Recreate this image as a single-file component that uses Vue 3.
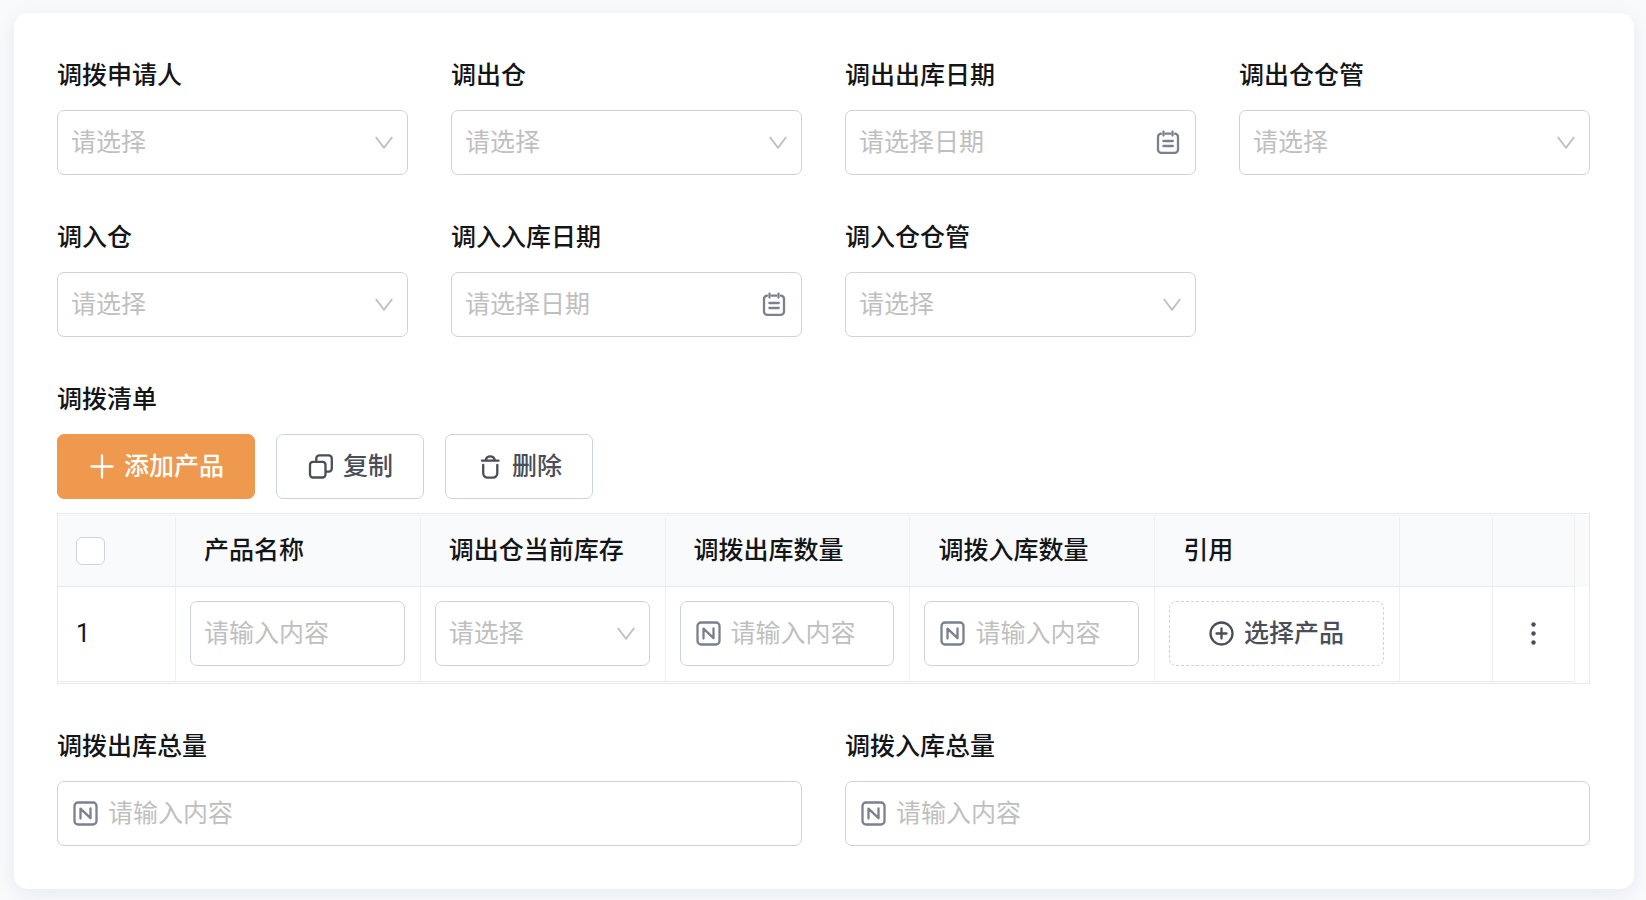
<script setup>
import { ref, reactive } from 'vue';

const fields = [
  { key: 'applicant', label: '调拨申请人', type: 'select' },
  { key: 'outStore', label: '调出仓', type: 'select' },
  { key: 'outDate', label: '调出出库日期', type: 'date' },
  { key: 'outKeeper', label: '调出仓仓管', type: 'select' },
  { key: 'inStore', label: '调入仓', type: 'select' },
  { key: 'inDate', label: '调入入库日期', type: 'date' },
  { key: 'inKeeper', label: '调入仓仓管', type: 'select' },
];

const totals = [
  { key: 'outTotal', label: '调拨出库总量' },
  { key: 'inTotal', label: '调拨入库总量' },
];

const columns = ['产品名称', '调出仓当前库存', '调拨出库数量', '调拨入库数量', '引用'];

const form = reactive({
  applicant: '',
  outStore: '',
  outDate: '',
  outKeeper: '',
  inStore: '',
  inDate: '',
  inKeeper: '',
  outTotal: '',
  inTotal: '',
});

const newRow = () => ({ name: '', stock: '', outCount: '', inCount: '' });
const rows = ref([newRow()]);
const checkAll = ref(false);

function addRow() {
  rows.value.push(newRow());
}

function copyRows() {
  if (!checkAll.value) return;
  rows.value.push(...rows.value.map(row => ({ ...row })));
}

function removeRows() {
  if (checkAll.value) rows.value = [];
}
</script>

<template>
  <svg class="sprite" aria-hidden="true">
    <symbol id="i-down" viewBox="0 0 18 14">
      <path d="M0.8 1 9 11.800 17.200 1" fill="none" stroke="currentColor" stroke-width="1.900" />
    </symbol>
    <symbol id="i-date" viewBox="0 0 25 25">
      <g fill="none" stroke="currentColor" stroke-width="2.300" stroke-linecap="round">
        <path d="M5 3.700a3.400 3.400 0 0 0-3 3.400v12.400A3.400 3.400 0 0 0 5.400 22.900h13.200a3.400 3.400 0 0 0 3.400-3.400V7.100a3.400 3.400 0 0 0-3-3.400M9.600 3.700h4.800" />
        <path d="M7.500 1.600v4M16.500 1.600v4M7.400 11h9.400M7.400 16h9.400" />
      </g>
    </symbol>
    <symbol id="i-number" viewBox="0 0 25 25">
      <g fill="none" stroke="currentColor" stroke-width="2.300" stroke-linecap="round" stroke-linejoin="round">
        <rect x="1.500" y="1.500" width="22" height="22" rx="3.500" />
        <path d="M7.500 17.600V7.600l10 9.600V7.400" />
      </g>
    </symbol>
    <symbol id="i-plus" viewBox="0 0 25 25">
      <path d="M13 1.500v22M2.500 12.500h21" fill="none" stroke="currentColor" stroke-width="2.300" stroke-linecap="round" />
    </symbol>
    <symbol id="i-copy" viewBox="0 0 25 25">
      <g fill="none" stroke="currentColor" stroke-width="2.300">
        <rect x="2" y="7.800" width="15.500" height="15.700" rx="3" />
        <path d="M8.300 7.500V4.400a3 3 0 0 1 3-3h9.500a3 3 0 0 1 3 3v10.200a3 3 0 0 1-3 3h-3" />
      </g>
    </symbol>
    <symbol id="i-trash" viewBox="0 0 25 25">
      <g fill="none" stroke="currentColor" stroke-width="2.300" stroke-linecap="round">
        <path d="M5 6.700h16.500M8.700 6.200a4.600 4.600 0 0 1 9.100 0" />
        <path d="M6.200 11v8.300a4.300 4.300 0 0 0 4.300 4.300h5.500a4.300 4.300 0 0 0 4.300-4.300V11" />
      </g>
    </symbol>
    <symbol id="i-add-circle" viewBox="0 0 25 25">
      <g fill="none" stroke="currentColor" stroke-width="2.300" stroke-linecap="round">
        <circle cx="12.500" cy="12.500" r="11" />
        <path d="M12.500 7.500v10M7.500 12.500h10" />
      </g>
    </symbol>
    <symbol id="i-more" viewBox="0 0 25 25">
      <g fill="currentColor">
        <circle cx="12.500" cy="3.500" r="2.200" />
        <circle cx="12.500" cy="12.500" r="2.200" />
        <circle cx="12.500" cy="21.500" r="2.200" />
      </g>
    </symbol>
  </svg>

  <form class="card" @submit.prevent>
    <div class="grid four">
      <div v-for="field in fields" :key="field.key">
        <label class="title" :for="field.key">{{ field.label }}</label>
        <div class="box">
          <template v-if="field.type === 'select'">
            <select :id="field.key" v-model="form[field.key]">
              <option value="">请选择</option>
            </select>
            <svg class="arrow"><use href="#i-down" /></svg>
          </template>
          <template v-else>
            <input :id="field.key" v-model="form[field.key]" type="text" placeholder="请选择日期">
            <svg class="icon muted"><use href="#i-date" /></svg>
          </template>
        </div>
      </div>
    </div>

    <section>
      <h2 class="title">调拨清单</h2>
      <div class="toolbar">
        <button type="button" class="btn primary" @click="addRow">
          <svg class="icon"><use href="#i-plus" /></svg>添加产品
        </button>
        <button type="button" class="btn" @click="copyRows">
          <svg class="icon"><use href="#i-copy" /></svg>复制
        </button>
        <button type="button" class="btn" @click="removeRows">
          <svg class="icon"><use href="#i-trash" /></svg>删除
        </button>
      </div>

      <div class="table-box">
        <div class="table-main">
          <table>
            <colgroup>
              <col class="col-index">
              <col v-for="name in columns" :key="name">
              <col class="col-blank">
              <col class="col-more">
            </colgroup>
            <thead>
              <tr>
                <th class="index">
                  <input v-model="checkAll" class="check" type="checkbox" aria-label="全选">
                </th>
                <th v-for="name in columns" :key="name">{{ name }}</th>
                <th></th>
                <th></th>
              </tr>
            </thead>
            <tbody>
              <tr v-for="(row, i) in rows" :key="i">
                <td class="index">{{ i + 1 }}</td>
                <td>
                  <div class="box">
                    <input v-model="row.name" type="text" placeholder="请输入内容" aria-label="产品名称">
                  </div>
                </td>
                <td>
                  <div class="box">
                    <select v-model="row.stock" aria-label="调出仓当前库存">
                      <option value="">请选择</option>
                    </select>
                    <svg class="arrow"><use href="#i-down" /></svg>
                  </div>
                </td>
                <td>
                  <div class="box number">
                    <svg class="icon muted"><use href="#i-number" /></svg>
                    <input v-model="row.outCount" type="text" placeholder="请输入内容" aria-label="调拨出库数量">
                  </div>
                </td>
                <td>
                  <div class="box number">
                    <svg class="icon muted"><use href="#i-number" /></svg>
                    <input v-model="row.inCount" type="text" placeholder="请输入内容" aria-label="调拨入库数量">
                  </div>
                </td>
                <td>
                  <button type="button" class="btn dashed">
                    <svg class="icon"><use href="#i-add-circle" /></svg>选择产品
                  </button>
                </td>
                <td></td>
                <td>
                  <button type="button" class="more" aria-label="更多">
                    <svg class="icon"><use href="#i-more" /></svg>
                  </button>
                </td>
              </tr>
            </tbody>
          </table>
        </div>
        <div class="gutter"></div>
      </div>
    </section>

    <div class="grid two">
      <div v-for="total in totals" :key="total.key">
        <label class="title" :for="total.key">{{ total.label }}</label>
        <div class="box number">
          <svg class="icon muted"><use href="#i-number" /></svg>
          <input :id="total.key" v-model="form[total.key]" type="text" placeholder="请输入内容">
        </div>
      </div>
    </div>
  </form>
</template>

<style>
body {
  background: #f8fafc;
}
</style>

<style scoped>
.sprite {
  display: none;
}

.card {
  display: flex;
  flex-direction: column;
  gap: 43px;
  margin: 13px 12px 11px 14px;
  padding: 43px 44px 43px 43px;
  border-radius: 14px;
  background: #fff;
  box-shadow: 0 4px 20px rgba(30, 40, 90, 0.08);
  color: #141517;
  font-family: Roboto, "Noto Sans CJK SC", sans-serif;
  font-size: 25px;
  line-height: 38px;
}

.grid {
  display: grid;
  gap: 43px;
}

.four {
  grid-template-columns: repeat(4, minmax(0, 1fr));
}

.two {
  grid-template-columns: repeat(2, minmax(0, 1fr));
}

.title {
  display: block;
  margin: 0 0 14px;
  font-size: 25px;
  font-weight: 500;
  line-height: 40px;
}

/* Поля ввода */
.box {
  display: flex;
  align-items: center;
  gap: 10px;
  box-sizing: border-box;
  height: 65px;
  padding: 0 14px 0 13px;
  border: 1px solid #cdd2e1;
  border-radius: 7px;
  background: #fff;
}

.number {
  padding-left: 15px;
}

.box input,
.box select {
  flex: 1;
  min-width: 0;
  height: 38px;
  margin: 0;
  padding: 0;
  border: 0;
  outline: 0;
  background: transparent;
  appearance: none;
  font: inherit;
  color: #bfbfbf;
}

.box input {
  color: #141517;
}

.box input::placeholder {
  color: #bfbfbf;
  opacity: 1;
}

.icon {
  flex: none;
  display: block;
  width: 25px;
  height: 25px;
}

.arrow {
  flex: none;
  width: 18px;
  height: 14px;
  color: #bfbfbf;
  pointer-events: none;
}

.muted {
  color: #7a818d;
}

/* Кнопки */
.toolbar {
  display: flex;
  gap: 21px;
  margin-bottom: 14px;
}

.btn {
  display: flex;
  align-items: center;
  justify-content: center;
  gap: 10px;
  box-sizing: border-box;
  height: 65px;
  padding: 0 30px 0 31px;
  border: 1px solid #cdd2e1;
  border-radius: 7px;
  background: #fff;
  color: #494e57;
  font: inherit;
  font-weight: 500;
  white-space: nowrap;
  cursor: pointer;
}

.primary {
  border-color: #ee994e;
  background: #ee994e;
  color: #fff;
}

.dashed {
  width: 100%;
  padding: 0;
  border-style: dashed;
}

/* Таблица */
.table-box {
  display: flex;
  align-items: flex-start;
  padding: 1px 0;
  border: 1px solid #e8e9ec;
}

.table-main {
  flex: 1;
  min-width: 0;
  padding-top: 1px;
  border-top: 1px solid #f0f0f0;
}

.gutter {
  width: 14px;
  height: 72px;
  background: #fafafa;
}

table {
  width: 100%;
  table-layout: fixed;
  border-collapse: separate;
  border-spacing: 0;
}

.col-index {
  width: 118px;
}

.col-blank {
  width: 93px;
}

.col-more {
  width: 82px;
}

th,
td {
  box-sizing: border-box;
  border-right: 1px solid #edeff2;
  border-bottom: 1px solid #e5eaf1;
  text-align: left;
}

th {
  height: 70px;
  padding: 0 0 2px 28px;
  background: #f9fafc;
  font-weight: 500;
  white-space: nowrap;
}

td {
  height: 95px;
  padding: 14px 15px 15px 14px;
}

th.index,
td.index {
  padding-left: 18px;
}

.check {
  display: block;
  width: 29px;
  height: 28px;
  margin: 0;
  border: 1px solid #cdd2e1;
  border-radius: 6px;
  background: #fff;
  appearance: none;
}

.check:checked {
  background: #ee994e;
}

.more {
  display: block;
  margin: 0 auto;
  padding: 0;
  border: 0;
  background: none;
  color: #494e57;
  cursor: pointer;
}
</style>
